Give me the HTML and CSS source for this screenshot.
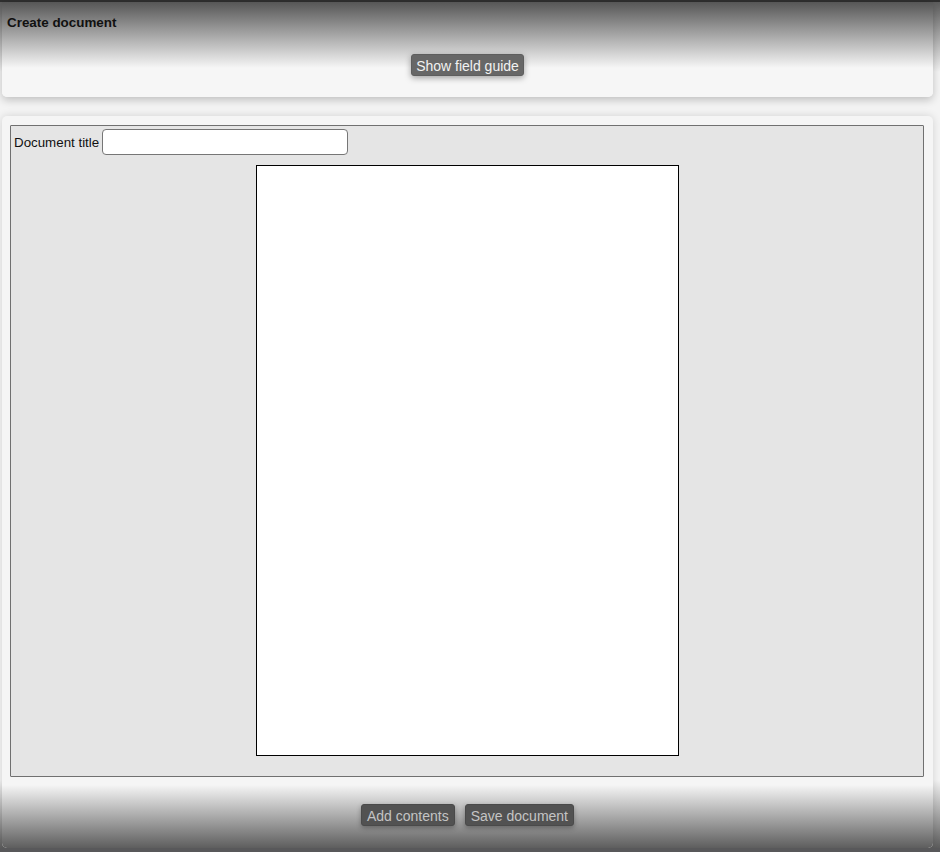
FILE: index.html
```html
<!DOCTYPE html>
<html lang="en">
<head>
<meta charset="utf-8">
<title>Create document</title>
<link rel="stylesheet" href="styles.css">
</head>
<body>
  <div class="topline"></div>
  <header class="head">
    <h1 class="head-title">Create document</h1>
    <div class="head-actions">
      <button class="btn btn-light" type="button">Show field guide</button>
    </div>
  </header>

  <main class="panel">
    <div class="editor">
      <div class="title-row">
        <label class="title-label" for="doc-title">Document title</label>
        <input class="title-input" id="doc-title" type="text">
      </div>
      <div class="sheet-wrap">
        <div class="sheet"></div>
      </div>
    </div>
    <footer class="panel-foot">
      <button class="btn btn-dark" type="button">Add contents</button>
      <button class="btn btn-dark" type="button">Save document</button>
    </footer>
  </main>
  <div class="bottomline"></div>
</body>
</html>
```

FILE: styles.css
```css
html, body {
  margin: 0;
  padding: 0;
}

body {
  width: 940px;
  height: 852px;
  overflow: hidden;
  font-family: "Liberation Sans", Arial, sans-serif;
  color: #000;
  background: linear-gradient(to bottom, #585858 0px, #f4f4f4 72px, #f4f4f4 780px, #5c5c5c 848px);
  display: flex;
  flex-direction: column;
}

.topline {
  height: 2px;
  background: #2f2f2f;
  flex: none;
}

.head {
  flex: none;
  width: 931px;
  height: 95px;
  margin-left: 2px;
  box-sizing: border-box;
  padding-top: 13px;
  border-radius: 0 0 5px 5px;
  background: linear-gradient(to bottom, #565656 0px, #f6f6f6 66px, #f6f6f6 100%);
  box-shadow: 0 3px 8px rgba(0, 0, 0, 0.22);
  position: relative;
  z-index: 1;
}

.head-title {
  margin: 0 0 0 5px;
  font-size: 13.4px;
  line-height: 15px;
  font-weight: bold;
  color: #111;
}

.head-actions {
  display: flex;
  justify-content: center;
  margin-top: 24px;
}

.btn {
  font-family: "Liberation Sans", Arial, sans-serif;
  font-size: 14px;
  line-height: 16px;
  height: 22px;
  padding: 3px 5px;
  border: 1px solid transparent;
  border-radius: 3px;
  cursor: pointer;
}

.btn-light {
  padding: 3px 4px;
  background: #676767;
  color: #f2f2f2;
  border-color: #5e5e5e;
  box-shadow: 0 2px 6px rgba(0, 0, 0, 0.35);
}

.btn-dark {
  background: #525252;
  color: #c4c4c4;
  border-color: #4a4a4a;
  box-shadow: 0 2px 5px rgba(0, 0, 0, 0.3);
}

.panel {
  flex: none;
  width: 931px;
  height: 732px;
  margin: 19px 0 0 2px;
  box-sizing: border-box;
  padding-top: 9px;
  border-radius: 5px;
  background: #f5f5f5;
  box-shadow: 0 0 8px rgba(0, 0, 0, 0.14);
  display: flex;
  flex-direction: column;
}

.editor {
  margin: 0 9px 0 8px;
  height: 652px;
  box-sizing: border-box;
  border: 1px solid #707070;
  border-radius: 1px;
  background: #e5e5e5;
  padding: 3px 3px 0 3px;
  display: flex;
  flex-direction: column;
}

.title-row {
  display: flex;
  align-items: center;
  gap: 3px;
  height: 26px;
}

.title-label {
  font-size: 13.33px;
  color: #111;
}

.title-input {
  width: 246px;
  height: 26px;
  box-sizing: border-box;
  border: 1px solid #767676;
  border-radius: 4px;
  background: #fff;
  padding: 2px 4px;
  font-size: 13.33px;
  font-family: "Liberation Sans", Arial, sans-serif;
}

.sheet-wrap {
  display: flex;
  justify-content: center;
  margin-top: 10px;
}

.sheet {
  width: 423px;
  height: 591px;
  box-sizing: border-box;
  border: 1px solid #000;
  background: #fff;
}

.panel-foot {
  flex: 1;
  display: flex;
  justify-content: center;
  align-items: flex-start;
  gap: 10px;
  padding-top: 27px;
  border-radius: 0 0 5px 5px;
  background: linear-gradient(to bottom, #f5f5f5 0px, #f5f5f5 8px, #5e5e5e 100%);
}

.bottomline {
  flex: none;
  height: 4px;
  background: #58585a;
}
```
